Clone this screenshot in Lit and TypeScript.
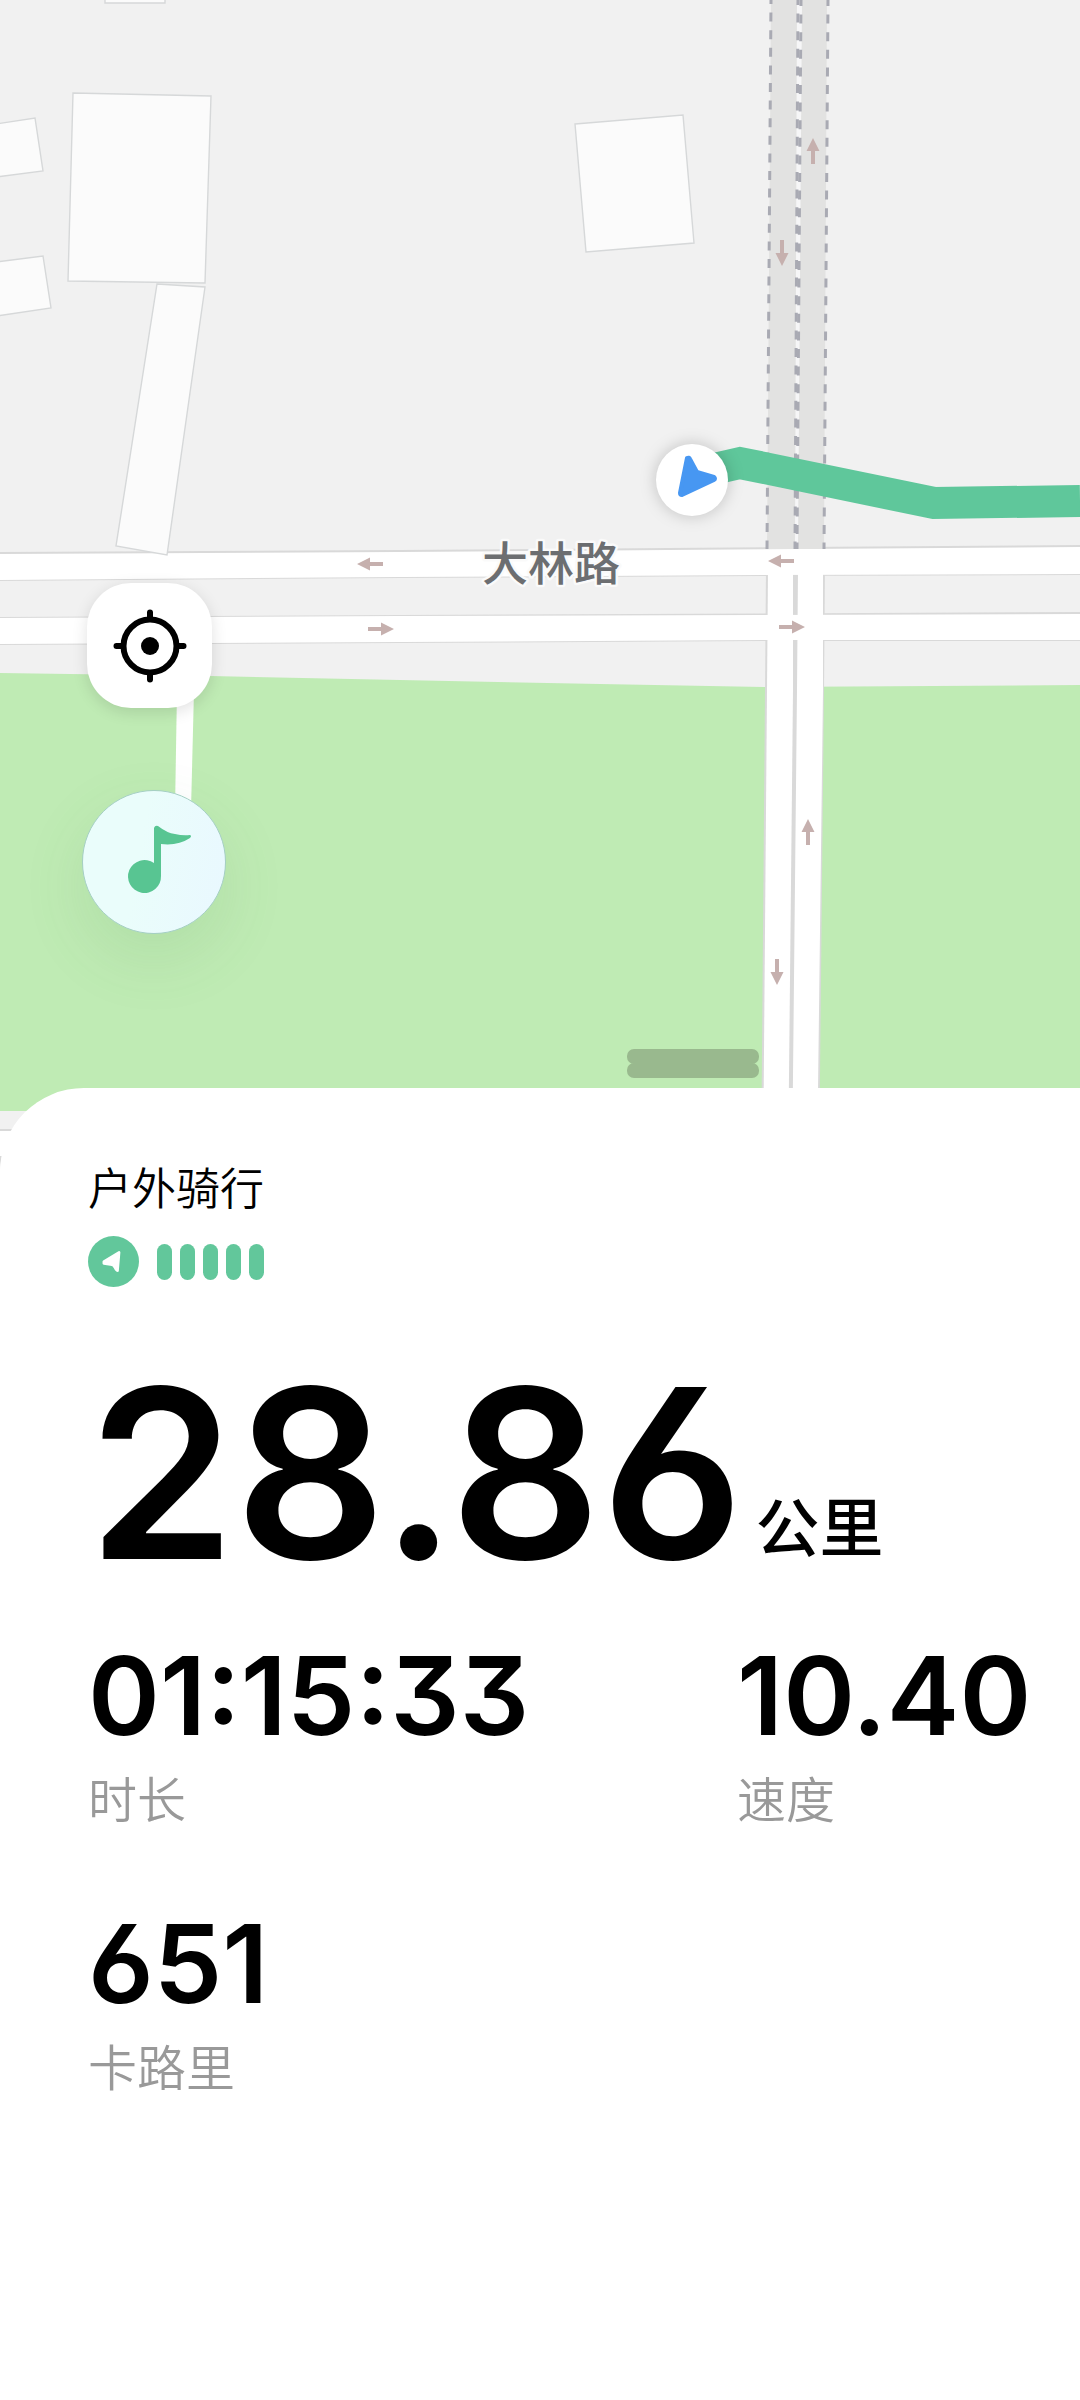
import { LitElement, html, svg, css } from 'lit';
import { customElement, property } from 'lit/decorators.js';

type Direction = 'up' | 'down' | 'left' | 'right';

interface RoadArrow {
    x: number;
    y: number;
    dir: Direction;
}

interface Stat {
    value: string;
    label: string;
}

const ANGLES: Record<Direction, number> = { up: 0, right: 90, down: 180, left: 270 };

const ARROWS: RoadArrow[] = [
    { x: 813, y: 151, dir: 'up' },
    { x: 782, y: 253, dir: 'down' },
    { x: 370, y: 564, dir: 'left' },
    { x: 381, y: 629, dir: 'right' },
    { x: 781, y: 561, dir: 'left' },
    { x: 792, y: 627, dir: 'right' },
    { x: 808, y: 832, dir: 'up' },
    { x: 777, y: 972, dir: 'down' },
];

const BUILDINGS = [
    '105,-8 165,-8 165,3 105,3',
    '73,93 211,96 205,283 68,281',
    '-4,124 35,118 43,171 -4,177',
    '-4,262 43,256 51,308 -4,316',
    '157,284 205,287 167,555 116,546',
    '575,124 683,115 694,243 586,252',
];

@customElement('route-map')
export class RouteMap extends LitElement {

    static styles = css`
        :host {
            display: block;
        }
        .canvas {
            display: block;
            width: 100%;
            height: auto;
        }
        .land { fill: #f1f1f1; }
        .park { fill: #bfebb4; }
        .building {
            fill: #fbfbfb;
            stroke: #d6d8d9;
            stroke-width: 1.4;
        }
        .casing { fill: #d9d9d9; }
        .road { fill: #fff; }
        .tunnel { fill: #e2e2e1; }
        .tunnel-gap { fill: #f6f6f7; }
        .tunnel-edge {
            fill: none;
            stroke: #a9aab3;
            stroke-width: 3;
            stroke-dasharray: 9 8.6;
        }
        .arrow { fill: #c6b0ae; }
        .blob { fill: #99b98e; }
        .name {
            font: 500 46px "Noto Sans CJK SC", sans-serif;
            fill: #6c6e71;
            stroke: #fafafa;
            stroke-width: 5px;
            stroke-linejoin: round;
            paint-order: stroke;
        }
        .route {
            fill: none;
            stroke: #5fc79b;
            stroke-width: 32;
        }
        .here {
            fill: #fff;
            filter: drop-shadow(0 0 8px rgba(0, 0, 0, 0.2));
        }
        .heading {
            fill: #4797f2;
            stroke: #4797f2;
            stroke-width: 4;
            stroke-linejoin: round;
        }
    `;

    renderArrow({ x, y, dir }: RoadArrow) {
        return svg`
            <path class="arrow" transform="translate(${x} ${y}) rotate(${ANGLES[dir]})"
                d="M0 -13 L6.5 0 H2 V13 H-2 V0 H-6.5 Z"></path>`;
    }

    render() {
        return html`
            <svg class="canvas" viewBox="0 0 1080 1172" role="img" aria-label="地图">
                <rect class="land" width="1080" height="1172"></rect>
                <path class="park" d="M0 673 L210 676 L400 680 L600 684 L765 687 L1080 685 V1111 H0 Z"></path>

                <path class="casing" d="M0 552 L400 550 L1080 545 V575 L765 576 L400 578 L0 581 Z
                    M0 617 L400 615 L1080 612 V641 L765 641 L400 643 L0 645 Z"></path>
                <path class="casing" d="M766 570 H825 L824 690 L819 1172 H761 L765 690 Z"></path>
                <path class="casing" d="M0 1129 H60 V1172 H0 Z"></path>

                <path class="road" d="M0 554 L400 552 L1080 547 V574 L765 575 L400 577 L0 580 Z
                    M0 618 L400 616 L1080 614 V640 L765 640 L400 642 L0 644 Z"></path>
                <path class="road" d="M768 570 H793 V690 L788 1172 H763 L767 690 Z"></path>
                <path class="road" d="M798 570 H823 V690 L817 1172 H792 L797 690 Z"></path>
                <path class="road" d="M768 552 H823 V574 H768 Z M768 616 H823 V640 H768 Z"></path>
                <path class="road" d="M177 690 H194 L191 810 H175 Z"></path>
                <path class="road" d="M0 1131 H60 V1172 H0 Z"></path>
                <path class="casing" d="M0 1156 H2 L0 1170 Z"></path>

                <path class="tunnel" d="M771 0 H827 L824 549 H767 Z"></path>
                <path class="tunnel-gap" d="M797 0 H802 L798 549 H795 Z"></path>
                <path class="tunnel-edge" stroke-dashoffset="5" d="M771 0 L767 549"></path>
                <path class="tunnel-edge" stroke-dashoffset="4" d="M798 0 L795 549"></path>
                <path class="tunnel-edge" stroke-dashoffset="3" d="M801 0 L797 549"></path>
                <path class="tunnel-edge" stroke-dashoffset="3" d="M828 0 L824 549"></path>

                ${BUILDINGS.map((points) => svg`<polygon class="building" points=${points}></polygon>`)}
                ${ARROWS.map((arrow) => this.renderArrow(arrow))}

                <rect class="blob" x="627" y="1049" width="132" height="15" rx="7"></rect>
                <rect class="blob" x="627" y="1063" width="132" height="15" rx="7"></rect>
                <rect class="blob" x="634" y="1056" width="118" height="14"></rect>
                <text class="name" x="482" y="580">大林路</text>

                <path class="route" d="M692 474 L740 463 L934 503 L1080 501"></path>
                <circle class="here" cx="692" cy="480" r="36"></circle>
                <path class="heading" d="M687 458 Q689 457 690 459 L697 472 L714 477 Q716 479 714 480 L682 495 Q680 495 680 493 Z"></path>
            </svg>
        `;
    }
}

@customElement('gps-signal')
export class GpsSignal extends LitElement {

    @property({ type: Number }) level = 5;

    static styles = css`
        :host {
            display: flex;
            align-items: center;
            gap: 18px;
        }
        .icon {
            width: 51px;
            height: 51px;
        }
        .bars {
            display: flex;
            gap: 8px;
        }
        .bar {
            width: 15px;
            height: 36px;
            border-radius: 8px;
            background: #62c79b;
        }
    `;

    render() {
        return html`
            <svg class="icon" viewBox="0 0 50 50" aria-hidden="true">
                <circle cx="25" cy="25" r="25" fill="#62c79b"></circle>
                <path d="M15.5 25 L30.5 16 L29 34 Q28 34 26.500 31 Q25 28 22 28 L15.5 27 Z"
                    fill="#fff" stroke="#fff" stroke-width="2.5" stroke-linejoin="round"></path>
            </svg>
            <div class="bars">
                ${Array.from({ length: this.level }, () => html`<span class="bar"></span>`)}
            </div>
        `;
    }
}

@customElement('app-root')
export class AppRoot extends LitElement {

    @property() distance = '28.86';

    @property({ attribute: false }) stats: Stat[] = [
        { value: '01:15:33', label: '时长' },
        { value: '10.40', label: '速度' },
        { value: '651', label: '卡路里' },
    ];

    static styles = css`
        :host {
            display: flex;
            flex-direction: column;
            min-height: 100vh;
            background: #fff;
            color: #000;
            font-family: Inter, "Noto Sans CJK SC", sans-serif;
        }
        .map {
            position: relative;
        }
        .control {
            position: absolute;
            display: grid;
            place-items: center;
            padding: 0;
            border: 0;
        }
        .locate {
            left: 87px;
            top: 583px;
            width: 125px;
            height: 125px;
            border-radius: 44px;
            background: #fff;
            box-shadow: 0 4px 16px rgba(0, 0, 0, 0.12);
        }
        .music {
            left: 82px;
            top: 790px;
            width: 144px;
            height: 144px;
            border: 1px solid #a5cfc4;
            border-radius: 50%;
            background: linear-gradient(100deg, #eafdfb 40%, #e9f8ff);
            box-shadow: 0 24px 64px rgba(70, 130, 70, 0.12);
        }
        .glyph {
            width: 76px;
            height: 76px;
        }
        .sheet {
            position: relative;
            flex: 1;
            margin-top: -84px;
            padding: 68px 40px 64px 88px;
            border-radius: 84px 0 0 0;
            background: #fff;
        }
        .title {
            margin: 0 0 14px;
            font-size: 44px;
            font-weight: 350;
            line-height: 66px;
        }
        .number {
            font-family: Inter, sans-serif;
            font-weight: 600;
            font-feature-settings: "cv03", "cv09";
        }
        .distance {
            display: flex;
            align-items: flex-end;
            gap: 12px;
            margin: 66px 0 32px;
        }
        .distance .number {
            font-size: 236px;
            line-height: 240px;
        }
        .unit {
            font-size: 64px;
            font-weight: 500;
            line-height: 130px;
        }
        .stats {
            display: grid;
            grid-template-columns: 15fr 7fr;
            row-gap: 56px;
            margin: 0;
        }
        .stat {
            display: flex;
            flex-direction: column-reverse;
        }
        .stat .number {
            margin: 0;
            font-size: 109px;
            line-height: 140px;
        }
        .label {
            font-size: 49px;
            font-weight: 350;
            line-height: 72px;
            color: #999;
        }
    `;

    render() {
        return html`
            <section class="map">
                <route-map></route-map>
                <button class="control locate" aria-label="定位">
                    <svg class="glyph" viewBox="-38 -38 76 76" fill="none" stroke="#000" stroke-width="6" stroke-linecap="round">
                        <circle r="26.5"></circle>
                        <circle r="9" fill="#000" stroke="none"></circle>
                        <path d="M0 -33.5 V-28 M0 33.5 V28 M-33.5 0 H-28 M33.5 0 H28"></path>
                    </svg>
                </button>
                <button class="control music" aria-label="音乐">
                    <svg class="glyph" viewBox="-38 -38 76 76" fill="#58c592">
                        <path d="M0 1 V-34 Q1 -37 4 -36 Q13 -29 21 -28 Q29 -26 36 -27 Q38 -26 36 -24 Q24 -16 7 -18 V14 A16.5 16.5 0 1 1 0 1 Z"></path>
                    </svg>
                </button>
            </section>
            <main class="sheet">
                <h1 class="title">户外骑行</h1>
                <gps-signal .level=${5}></gps-signal>
                <div class="distance">
                    <span class="number">${this.distance}</span>
                    <span class="unit">公里</span>
                </div>
                <dl class="stats">
                    ${this.stats.map((stat) => html`
                        <div class="stat">
                            <dt class="label">${stat.label}</dt>
                            <dd class="number">${stat.value}</dd>
                        </div>
                    `)}
                </dl>
            </main>
        `;
    }
}
